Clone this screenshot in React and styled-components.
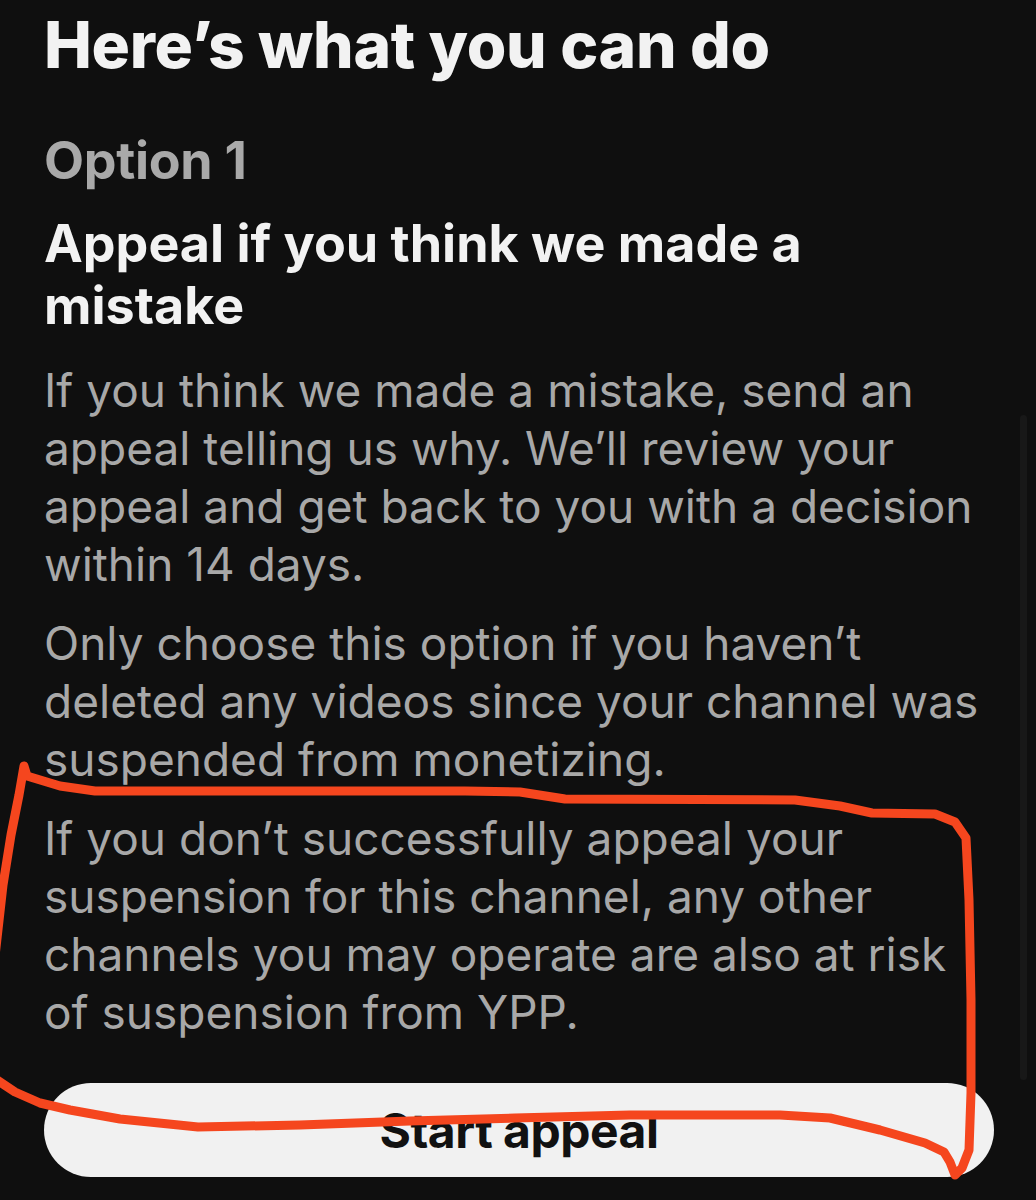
import React from "react";
import styled, { createGlobalStyle } from "styled-components";

const GlobalStyle = createGlobalStyle`
  html, body {
    margin: 0;
    padding: 0;
    background: #0f0f0f;
  }
  body {
    font-family: Inter, "Noto Sans", "Liberation Sans", sans-serif;
    -webkit-font-smoothing: antialiased;
  }
`;

const Screen = styled.div`
  position: relative;
  width: 1036px;
  height: 1200px;
  overflow: hidden;
  background: #0f0f0f;
  box-sizing: border-box;
  padding: 7px 43px 0 44px;
  display: flex;
  flex-direction: column;
`;

const Title = styled.h1`
  margin: 0;
  color: #f2f2f2;
  font-size: 64px;
  line-height: 76px;
  font-weight: 800;
  letter-spacing: -0.3px;
`;

const OptionLabel = styled.div`
  margin-top: 48px;
  color: #a9a9a9;
  font-size: 52px;
  line-height: 60px;
  font-weight: 700;
  letter-spacing: -0.3px;
`;

const OptionTitle = styled.h2`
  margin: 22px 0 0;
  color: #f2f2f2;
  font-size: 52px;
  line-height: 62px;
  font-weight: 700;
  letter-spacing: 0;
`;

const Body = styled.p`
  margin: ${(p) => (p.$first ? "24px" : "21px")} 0 0;
  color: #a8a8a8;
  font-size: 46px;
  line-height: 58px;
  font-weight: 400;
  letter-spacing: 0;
`;

const Button = styled.button`
  margin-top: 42px;
  width: 950px;
  height: 94px;
  border: none;
  border-radius: 47px;
  background: #f1f1f1;
  color: #111;
  font-family: inherit;
  font-size: 48px;
  font-weight: 700;
  letter-spacing: -0.5px;
  display: flex;
  align-items: center;
  justify-content: center;
  padding: 0;
`;

const ScrollTrack = styled.div`
  position: absolute;
  right: 9px;
  top: 415px;
  width: 7px;
  height: 665px;
  border-radius: 4px;
  background: #181818;
`;

const Markup = styled.svg`
  position: absolute;
  inset: 0;
  pointer-events: none;
`;

const outline =
  "M -6 965 L 3 885 L 11 835 L 19 795 L 24 766 L 27 776 L 60 786 L 95 791 " +
  "L 465 791 L 520 792 L 565 799 L 795 800 L 840 806 L 872 813 L 935 814 " +
  "L 955 822 L 966 838 L 969 900 L 971 1000 L 971 1093 L 969 1150 L 962 1168 " +
  "L 955 1175 L 950 1162 L 944 1152 L 925 1143 L 880 1130 L 830 1118 L 780 1115 " +
  "L 630 1115 L 515 1118 L 410 1121 L 300 1125 L 198 1127 L 120 1119 L 70 1110 " +
  "L 40 1103 L 15 1092 L -6 1078";

export default function App() {
  return (
    <>
      <GlobalStyle />
      <Screen>
        <Title>Here’s what you can do</Title>
        <OptionLabel>Option 1</OptionLabel>
        <OptionTitle>
          Appeal if you think we made a
          <br />
          mistake
        </OptionTitle>
        <Body $first>
          If you think we made a mistake, send an appeal telling us why. We’ll
          review your appeal and get back to you with a decision within 14 days.
        </Body>
        <Body>
          Only choose this option if you haven’t deleted any videos since your
          channel was suspended from monetizing.
        </Body>
        <Body>
          If you don’t successfully appeal your suspension for this channel, any
          other channels you may operate are also at risk of suspension from YPP.
        </Body>
        <Button>Start appeal</Button>
        <ScrollTrack />
        <Markup width="1036" height="1200" viewBox="0 0 1036 1200">
          <path
            d={outline}
            fill="none"
            stroke="#f5461e"
            strokeWidth="9"
            strokeLinejoin="round"
            strokeLinecap="round"
          />
        </Markup>
      </Screen>
    </>
  );
}
